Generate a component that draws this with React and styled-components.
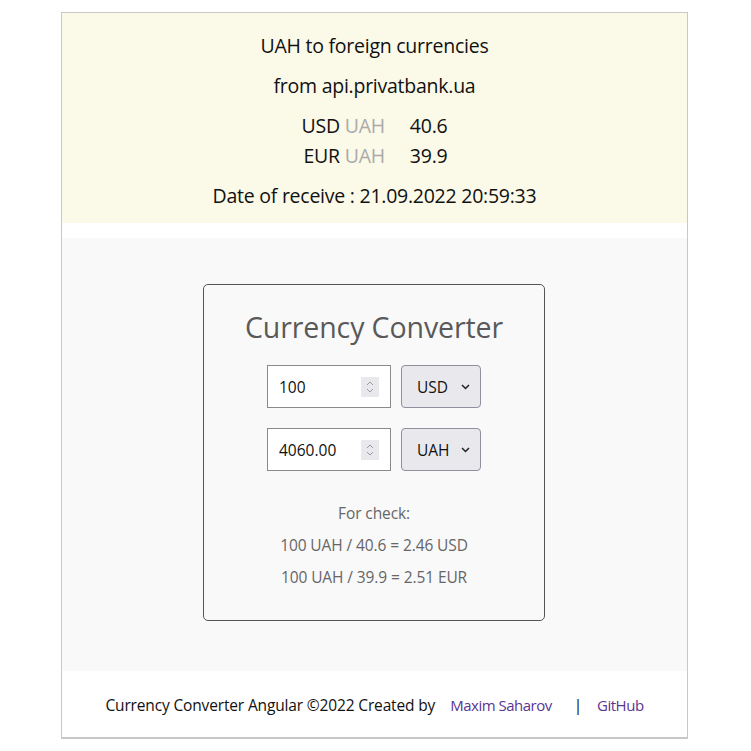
import React from "react";
import styled, { createGlobalStyle } from "styled-components";

const Global = createGlobalStyle`
  html, body { margin: 0; padding: 0; background: #fff; }
  body { font-family: "Open Sans", "Noto Sans", sans-serif; color: #111; }
  * { box-sizing: border-box; }
`;

const Page = styled.div`
  width: 627px;
  margin: 12px 0 0 61px;
  border: 1px solid #c8c8c8;
  border-bottom-width: 2px;
  display: flex;
  flex-direction: column;
`;

const Header = styled.header`
  background: #fbf9e8;
  padding: 18px 0 12px;
  margin-bottom: 15px;
  display: flex;
  flex-direction: column;
  align-items: center;
  gap: 10px;
  font-size: 19.5px;
  letter-spacing: -0.25px;
`;

const Line = styled.div`
  line-height: 30px;
`;

const Rates = styled.table`
  border-collapse: collapse;
  font-size: 19.5px;
  td { padding: 0; line-height: 30px; }
  td:first-child { text-align: right; padding-right: 25px; }
`;

const Muted = styled.span`
  color: #aaaaaa;
`;

const Main = styled.main`
  background: #f9f9f9;
  padding: 46px 1px 50px 0;
  display: flex;
  justify-content: center;
`;

const Card = styled.section`
  width: 342px;
  border: 1px solid #555;
  border-radius: 5px;
  padding: 24px 0 27px;
  display: flex;
  flex-direction: column;
  align-items: center;
`;

const Title = styled.h1`
  margin: 0 0 20px;
  font-weight: 400;
  font-size: 28.5px;
  line-height: 36px;
  color: #595959;
  letter-spacing: -0.1px;
`;

const Rows = styled.div`
  display: flex;
  flex-direction: column;
  gap: 20px;
  margin-bottom: 26px;
`;

const Row = styled.div`
  display: flex;
  gap: 10px;
`;

const NumberBox = styled.div`
  width: 124px;
  height: 43px;
  border: 1px solid #8a8a8a;
  background: #fff;
  display: flex;
  align-items: center;
  padding: 0 11px 0 11px;
`;

const NumInput = styled.input`
  flex: 1;
  min-width: 0;
  border: none;
  outline: none;
  background: transparent;
  font: inherit;
  font-size: 15.5px;
  color: #111;
  padding: 0;
`;

const Spin = styled.span`
  width: 18px;
  height: 20px;
  background: #e9e9ed;
  display: flex;
  align-items: center;
  justify-content: center;
`;

const SelectBox = styled.div`
  width: 80px;
  height: 43px;
  border: 1px solid #8f8f9d;
  border-radius: 4px;
  background: #e9e9ed;
  display: flex;
  align-items: center;
  padding: 0 10px 0 15px;
  gap: 8px;
`;

const Select = styled.select`
  appearance: none;
  -webkit-appearance: none;
  border: none;
  background: transparent;
  font: inherit;
  font-size: 15.5px;
  color: #111;
  flex: 1;
  min-width: 0;
  padding: 0;
  outline: none;
`;

const Check = styled.div`
  display: flex;
  flex-direction: column;
  align-items: center;
  font-size: 15.5px;
  line-height: 32px;
  color: #666;
  letter-spacing: -0.1px;
`;

const Footer = styled.footer`
  height: 66px;
  display: flex;
  align-items: center;
  justify-content: center;
  font-size: 15.5px;
  letter-spacing: -0.15px;
  color: #111;
  padding-top: 1px;
`;

const Link = styled.a`
  color: #5b3592;
  text-decoration: none;
  margin-left: 15px;
  font-size: 15px;
  letter-spacing: -0.5px;
`;

const Sep = styled.span`
  margin-left: 22px;
  color: #111;
`;

const Spinner = () => (
  <Spin>
    <svg width="10" height="16" viewBox="0 0 10 16" fill="none" stroke="#9a9a9a" strokeWidth="1">
      <path d="M2 6 L5 3 L8 6" />
      <path d="M2 10 L5 13 L8 10" />
    </svg>
  </Spin>
);

const Chevron = () => (
  <svg width="9" height="6" viewBox="0 0 9 6" fill="none" stroke="#222" strokeWidth="1.5">
    <path d="M1 1 L4.5 4.5 L8 1" />
  </svg>
);

const Converter = ({ value, currency }) => (
  <Row>
    <NumberBox>
      <NumInput type="text" defaultValue={value} />
      <Spinner />
    </NumberBox>
    <SelectBox>
      <Select defaultValue={currency}>
        <option>USD</option>
        <option>EUR</option>
        <option>UAH</option>
      </Select>
      <Chevron />
    </SelectBox>
  </Row>
);

export default function App() {
  return (
    <>
      <Global />
      <Page>
        <Header>
          <Line>UAH to foreign currencies</Line>
          <Line>from api.privatbank.ua</Line>
          <Rates>
            <tbody>
              <tr>
                <td>USD <Muted>UAH</Muted></td>
                <td>40.6</td>
              </tr>
              <tr>
                <td>EUR <Muted>UAH</Muted></td>
                <td>39.9</td>
              </tr>
            </tbody>
          </Rates>
          <Line>Date of receive : 21.09.2022 20:59:33</Line>
        </Header>
        <Main>
          <Card>
            <Title>Currency Converter</Title>
            <Rows>
              <Converter value="100" currency="USD" />
              <Converter value="4060.00" currency="UAH" />
            </Rows>
            <Check>
              <div>For check:</div>
              <div>100 UAH / 40.6 = 2.46 USD</div>
              <div>100 UAH / 39.9 = 2.51 EUR</div>
            </Check>
          </Card>
        </Main>
        <Footer>
          Currency Converter Angular ©2022 Created by
          <Link href="#">Maxim Saharov</Link>
          <Sep>|</Sep>
          <Link href="#">GitHub</Link>
        </Footer>
      </Page>
    </>
  );
}
